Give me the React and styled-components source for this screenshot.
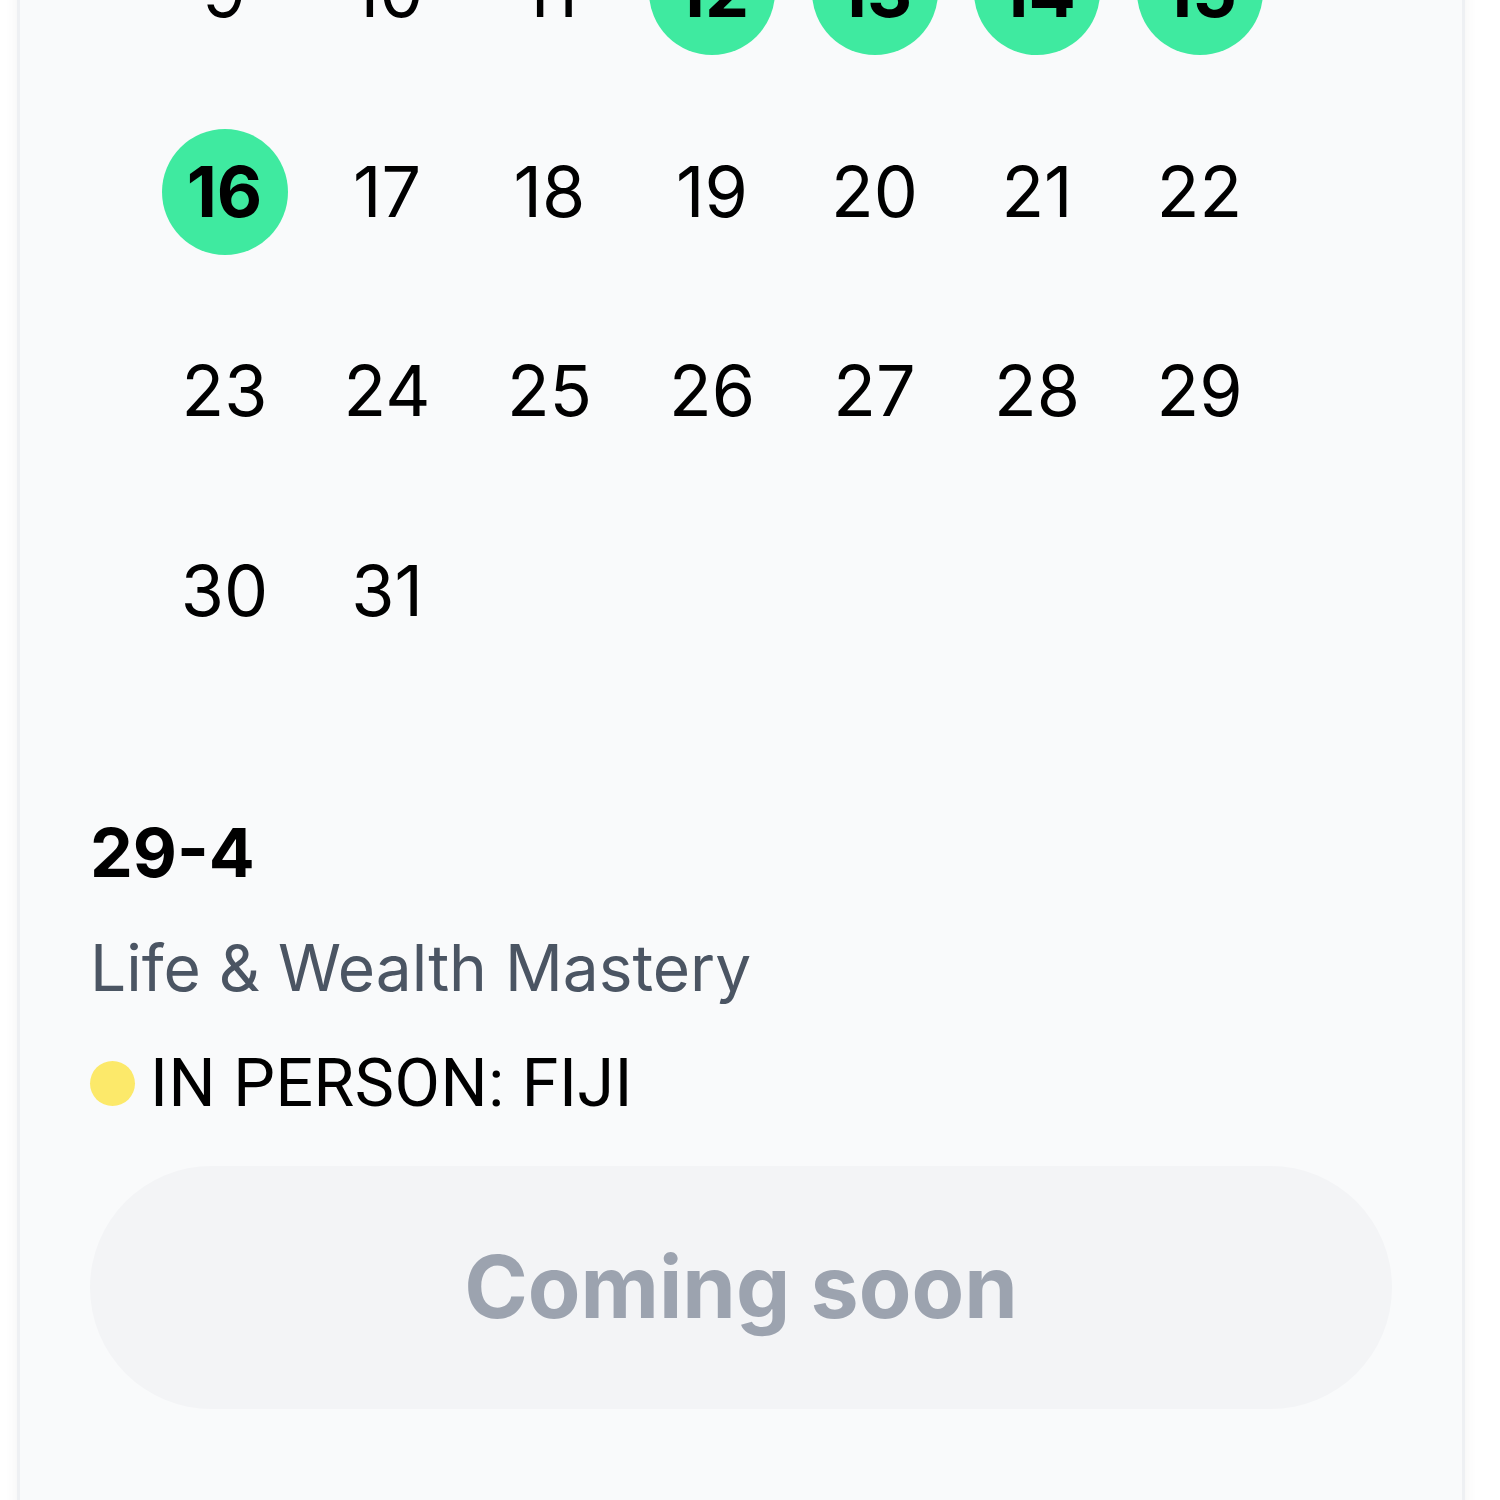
import React from 'react';
import styled, { createGlobalStyle } from 'styled-components';

const GlobalStyle = createGlobalStyle`
  html, body {
    margin: 0;
    padding: 0;
    background: #ffffff;
    overflow: hidden;
  }
  body {
    font-family: Inter, "Noto Sans", sans-serif;
    color: #000000;
  }
`;

const Page = styled.div`
  width: 1500px;
  height: 1500px;
  overflow: hidden;
  padding-left: 17px;
  box-sizing: border-box;
`;

// the page is scrolled: the card's top sits above the window
const Card = styled.div`
  width: 1448px;
  margin-top: -144px;
  box-sizing: border-box;
  background: #f9fafb;
  border: 3.5px solid #eef0f3;
  box-shadow: 0 0 14px rgba(0, 0, 0, 0.05);
  padding: 70px 70px 200px;
`;

const Grid = styled.div`
  display: grid;
  grid-template-columns: repeat(7, 126px);
  grid-auto-rows: 126px;
  column-gap: 36.5px;
  row-gap: 73.5px;
  padding-left: 71.5px;
`;

const Day = styled.div`
  display: flex;
  align-items: center;
  justify-content: center;
  border-radius: 50%;
  font-size: 70px;
  line-height: 1;
  font-weight: ${p => (p.$active ? 700 : 400)};
  background: ${p => (p.$active ? '#3feaa0' : 'transparent')};
  color: #000000;
`;

const Details = styled.div`
  display: flex;
  flex-direction: column;
`;

const Range = styled.h2`
  margin: 163.5px 0 0;
  font-size: 68px;
  line-height: 70px;
  font-weight: 700;
  color: #000000;
`;

const Title = styled.p`
  margin: 48.5px 0 0;
  font-size: 64px;
  line-height: 63px;
  color: #4b5563;
`;

const Location = styled.div`
  display: flex;
  align-items: center;
  gap: 15px;
  margin-top: 53px;
  height: 63px;
`;

const Dot = styled.span`
  width: 45px;
  height: 45px;
  border-radius: 50%;
  background: ${p => p.$color};
  flex-shrink: 0;
`;

const LocationText = styled.span`
  font-family: Roboto, "Noto Sans", sans-serif;
  font-size: 66px;
  line-height: 63px;
  letter-spacing: 0.6px;
  color: #000000;
`;

const Button = styled.button`
  margin-top: 51px;
  width: 100%;
  height: 243px;
  border: none;
  border-radius: 9999px;
  background: #f3f4f6;
  color: #9ca3af;
  font-family: Inter, "Noto Sans", sans-serif;
  font-size: 86px;
  font-weight: 700;
  cursor: default;
`;

const rows = [
  [9, 10, 11, 12, 13, 14, 15],
  [16, 17, 18, 19, 20, 21, 22],
  [23, 24, 25, 26, 27, 28, 29],
  [30, 31],
];

const eventDays = [12, 13, 14, 15, 16];

export default function App() {
  return (
    <Page>
      <GlobalStyle />
      <Card>
        <Grid>
          {rows.flat().map(d => (
            <Day key={d} $active={eventDays.includes(d)}>{d}</Day>
          ))}
        </Grid>
        <Details>
          <Range>29-4</Range>
          <Title>Life &amp; Wealth Mastery</Title>
          <Location>
            <Dot $color="#fce96a" />
            <LocationText>IN PERSON: FIJI</LocationText>
          </Location>
          <Button disabled>Coming soon</Button>
        </Details>
      </Card>
    </Page>
  );
}
